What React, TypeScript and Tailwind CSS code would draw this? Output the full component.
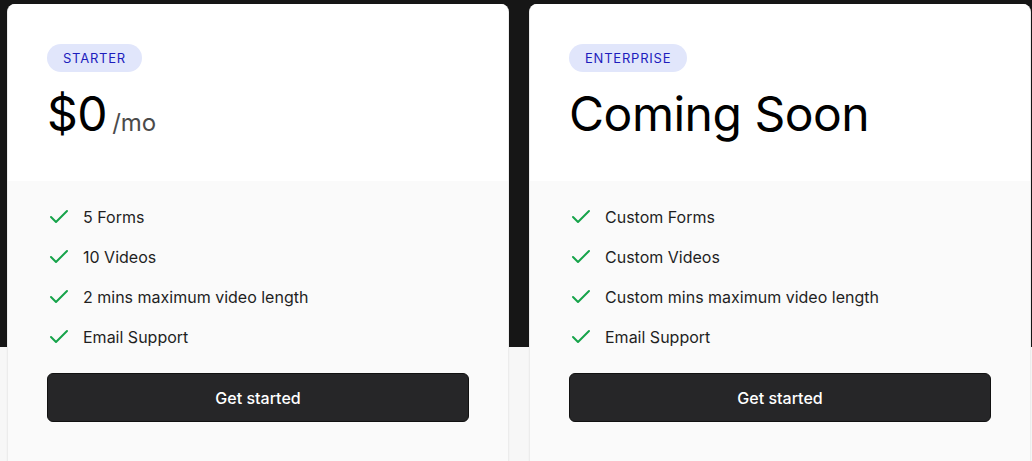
import { Check } from 'lucide-react'

// Pricing cards over a dark band — Starter / Enterprise

const plans = [
  {
    tag: 'Starter',
    price: (
      <p className="mt-[18px] flex items-baseline leading-none">
        <span className="text-[48px] text-black tracking-[-0.01em]">$0</span>
        <span className="ml-[5px] text-[24px] text-[#4b4b4b]">/mo</span>
      </p>
    ),
    features: ['5 Forms', '10 Videos', '2 mins maximum video length', 'Email Support'],
  },
  {
    tag: 'Enterprise',
    price: (
      <p className="mt-[18px] leading-none text-[48px] text-black tracking-[-0.01em]">Coming Soon</p>
    ),
    features: ['Custom Forms', 'Custom Videos', 'Custom mins maximum video length', 'Email Support'],
  },
]

function PlanCard({ plan }: { plan: (typeof plans)[number] }) {
  return (
    <div className="rounded-t-lg overflow-hidden bg-white border border-[#ececec] border-t-0 shadow-[0_0_2px_rgba(0,0,0,0.06)]">
      <div className="px-[39px] pt-10 pb-[43px] bg-white">
        <span className="inline-flex items-center h-7 pt-px px-4 rounded-full bg-[#e1e6fb] text-[13px] uppercase tracking-[0.06em] text-[#1d1dbd]">
          {plan.tag}
        </span>
        {plan.price}
      </div>
      <div className="bg-[#fafafa] px-[39px] pt-6 pb-10">
        <ul className="flex flex-col gap-4">
          {plan.features.map(f => (
            <li key={f} className="flex items-center gap-3 h-6 text-[16px] text-[#1f1f1f]">
              <Check className="w-6 h-6 text-[#16a34a]" strokeWidth={2} aria-hidden />
              <span>{f}</span>
            </li>
          ))}
        </ul>
        <button className="mt-6 w-full h-[49px] rounded-md bg-[#262628] border border-[#111] text-white text-[16px] font-medium">
          Get started
        </button>
      </div>
    </div>
  )
}

export default function App() {
  return (
    <div
      className="min-h-[461px] w-[1032px] overflow-hidden bg-[linear-gradient(to_bottom,#161616_347px,#f7f7f7_347px)] pt-1 pl-[7px] pr-px"
      style={{ fontFamily: 'Inter, "Noto Sans", sans-serif' }}
    >
      <div className="grid grid-cols-2 gap-5">
        {plans.map(p => (
          <PlanCard key={p.tag} plan={p} />
        ))}
      </div>
    </div>
  )
}
